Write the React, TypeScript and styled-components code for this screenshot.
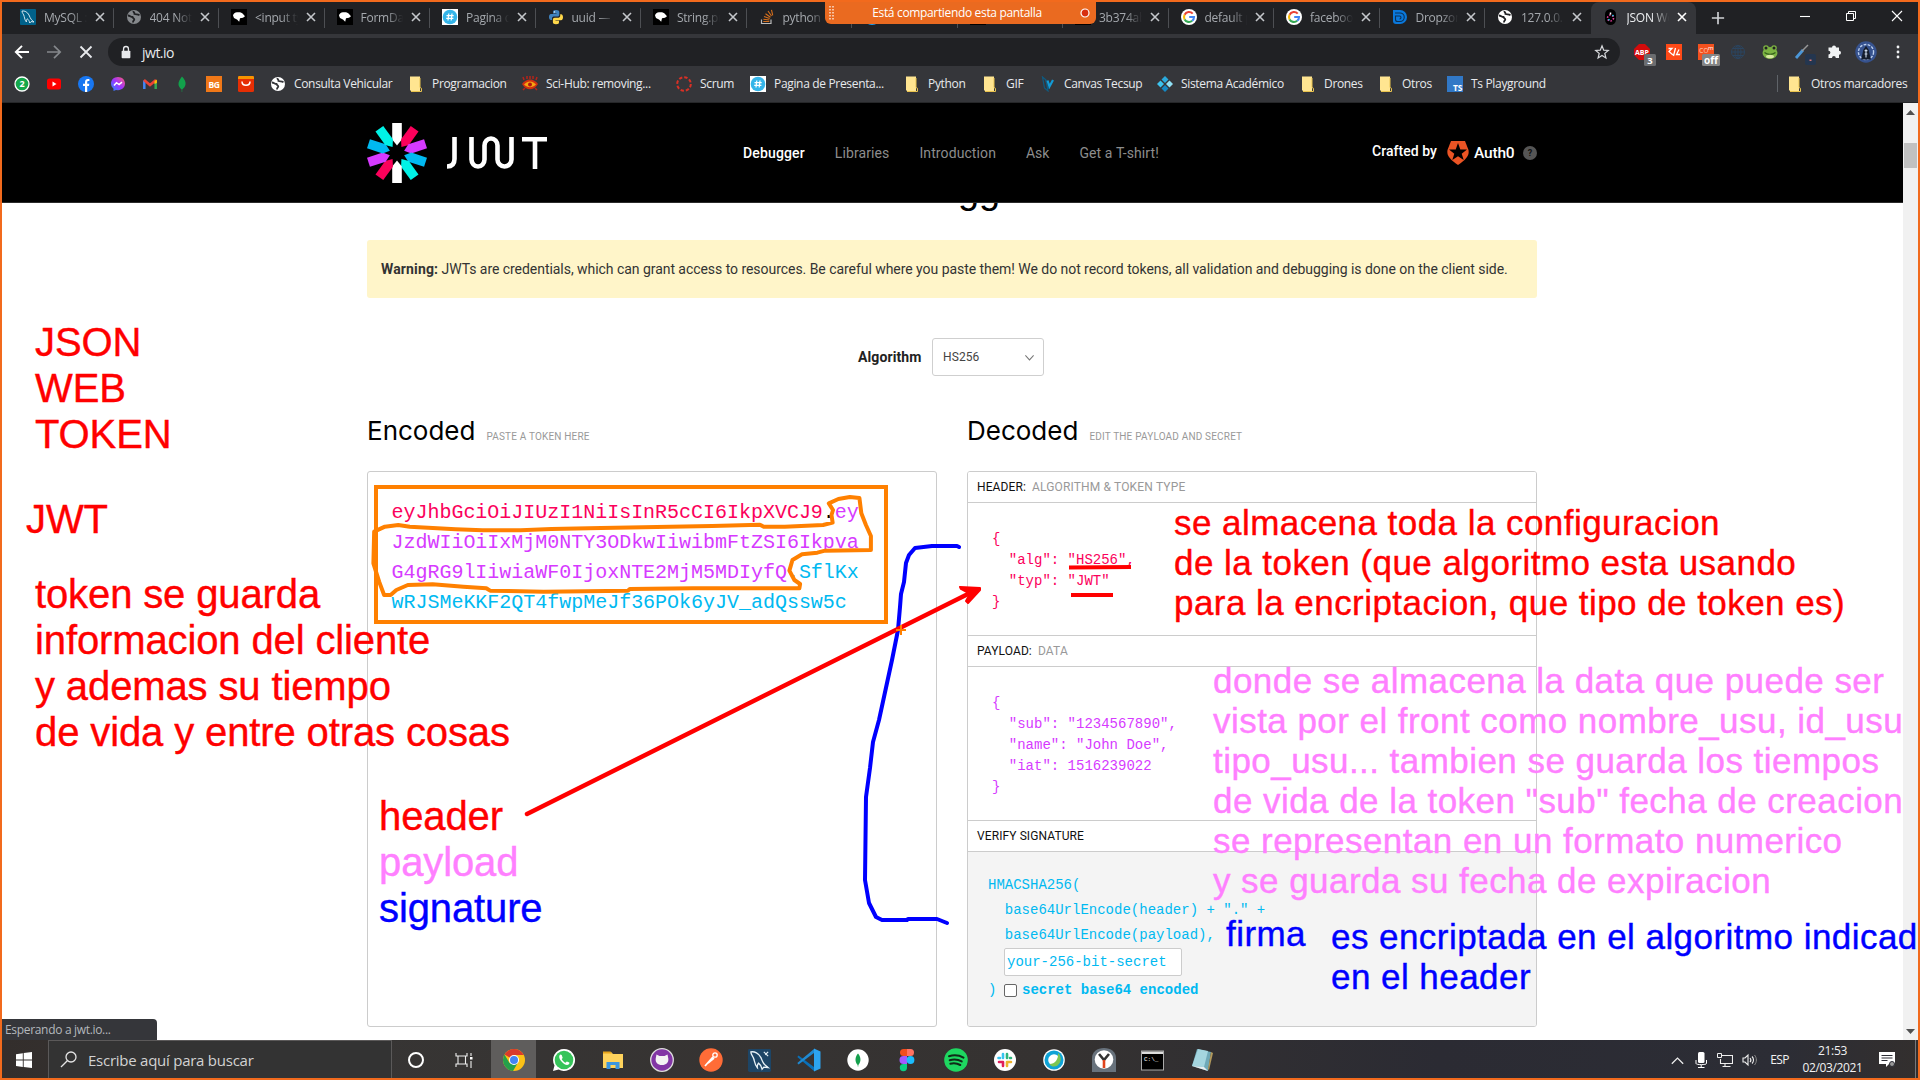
import React from 'react';
import styled, { createGlobalStyle } from 'styled-components';

const UI = '"Open Sans", "Noto Sans", sans-serif';
const SITE = 'Roboto, "Liberation Sans", sans-serif';
const MONO = '"Liberation Mono", "DejaVu Sans Mono", monospace';

const Global = createGlobalStyle`
  * { box-sizing: border-box; }
  body { margin: 0; background: #fff; overflow: hidden; }
  svg { display: block; flex: none; }
`;

const Screen = styled.div`
  position: relative;
  width: 1920px;
  height: 1080px;
  overflow: hidden;
  border: 2px solid #f26a1d;
  display: flex;
  flex-direction: column;
  font-family: ${UI};
`;

/* ---------- browser chrome ---------- */
const TabStrip = styled.div`
  height: 32px;
  background: #202124;
  display: flex;
  align-items: center;
  padding-left: 6px;
  flex: none;
`;
const Tab = styled.div<{ $active?: boolean; $bare?: boolean }>`
  width: 105.5px;
  height: 32px;
  display: flex;
  align-items: center;
  padding: 0 9px 2px 12px;
  border-radius: 8px 8px 0 0;
  background: ${p => (p.$active ? '#35363a' : 'transparent')};
  background-image: ${p => (p.$active || p.$bare ? 'none' : 'linear-gradient(#4d4f53, #4d4f53)')};
  background-size: 1px 20px;
  background-position: right 6px;
  background-repeat: no-repeat;
  color: ${p => (p.$active ? '#eceef0' : '#a5a9ae')};
  flex: none;
`;
const TabTitle = styled.span`
  width: 44px;
  margin: 0 7px 0 8px;
  overflow: hidden;
  white-space: nowrap;
  font-size: 12px;
  letter-spacing: -0.25px;
  mask-image: linear-gradient(90deg, #000 60%, transparent 98%);
`;
const NewTab = styled.div`
  width: 44px;
  display: flex;
  justify-content: center;
`;
const WindowButtons = styled.div`
  margin-left: auto;
  display: flex;
  padding-bottom: 5px;
  & > svg { margin: 0 15px; }
  & > :last-child { margin-right: 13px; }
`;
const Toolbar = styled.div`
  height: 36px;
  background: #35363a;
  display: flex;
  align-items: center;
  padding-left: 12px;
  flex: none;
`;
const NavButtons = styled.div`
  display: flex;
  gap: 16px;
  width: 94px;
`;
const Omnibox = styled.div`
  width: 1512px;
  height: 28px;
  border-radius: 14px;
  background: #202124;
  color: #e8eaed;
  font-size: 14px;
  letter-spacing: -0.5px;
  display: flex;
  align-items: center;
  padding: 0 10px 0 11px;
  gap: 9px;
  & > :last-child { margin-left: auto; }
`;
const Extensions = styled.div`
  display: flex;
  align-items: center;
  gap: 16px;
  padding-left: 14px;
  & > :nth-last-child(-n + 2) { margin-left: -3px; }
`;
const Bookmarks = styled.div`
  height: 33px;
  background: #35363a;
  border-bottom: 1px solid #262729;
  display: flex;
  align-items: center;
  padding: 0 0 5px 12px;
  flex: none;
`;
const Bookmark = styled.div<{ $w: number }>`
  width: ${p => p.$w}px;
  display: flex;
  align-items: center;
  gap: 8px;
  white-space: nowrap;
  font-size: 12px;
  letter-spacing: -0.33px;
  color: #e8eaed;
  flex: none;
`;
const OtherMarks = styled(Bookmark)`
  margin-left: auto;
  border-left: 1px solid #5f6368;
  padding-left: 9px;
`;

const ShareBanner = styled.div`
  position: absolute;
  left: 823px;
  top: 0;
  width: 271px;
  height: 22px;
  border-radius: 0 0 6px 6px;
  background: #ea6a20;
  color: #fff;
  font-size: 12px;
  letter-spacing: -0.34px;
  display: flex;
  align-items: center;
  justify-content: space-between;
  padding: 0 6px 1px 4px;
`;

/* ---------- site ---------- */
const Viewport = styled.div`
  flex: 1;
  display: flex;
  min-height: 0;
`;
const Site = styled.div`
  flex: 1;
  background: #fff;
  font-family: ${SITE};
  overflow: hidden;
`;
const SiteHeader = styled.header`
  height: 100px;
  background: #000;
  border-bottom: 1px solid #2a2a2a;
  padding-left: 365px;
  display: flex;
  align-items: center;
`;
const Wordmark = styled.svg`
  margin-left: 20px;
`;
const Nav = styled.nav`
  display: flex;
  gap: 30px;
  margin-left: 195px;
  font-size: 14px;
  width: 629px;
`;
const NavLink = styled.span<{ $on?: boolean; $sp: number }>`
  color: ${p => (p.$on ? '#fff' : '#8d8d8d')};
  font-weight: ${p => (p.$on ? 500 : 400)};
  letter-spacing: ${p => p.$sp}px;
  white-space: nowrap;
`;
const Crafted = styled.span`
  color: #fff;
  font-size: 14px;
  font-weight: 500;
  letter-spacing: 0.05px;
  width: 75px;
  padding-bottom: 4px;
  white-space: nowrap;
`;
const AuthName = styled.span`
  color: #fff;
  font-size: 15.5px;
  font-weight: 500;
  letter-spacing: -0.2px;
  margin: 0 10px 0 5px;
  width: 39px;
`;
const Help = styled.span`
  width: 14px;
  height: 14px;
  border-radius: 50%;
  background: #555;
  color: #111;
  font-size: 9px;
  font-weight: 700;
  line-height: 14px;
  text-align: center;
`;
const Main = styled.main`
  padding-left: 365px;
  width: 1535px;
  height: 837px;
  overflow: hidden;
`;
const Title = styled.h1`
  margin: -13px 0 0;
  padding-right: 3px;
  height: 50px;
  line-height: 0;
  font-family: "Liberation Sans", sans-serif;
  font-size: 38px;
  font-weight: 400;
  text-align: center;
  color: #000;
`;
const Warning = styled.div`
  height: 58px;
  border-radius: 3px;
  background: #fff5c9;
  color: #333;
  font-size: 14px;
  letter-spacing: -0.045px;
  line-height: 59px;
  padding-left: 14px;
  white-space: nowrap;
  & > b { letter-spacing: 0.14px; }
`;
const AlgoRow = styled.div`
  margin-top: 40px;
  height: 38px;
  padding-left: 491px;
  display: flex;
  align-items: center;
  font-size: 14px;
  font-weight: 700;
  letter-spacing: 0.1px;
  color: #222;
  & > span { width: 74px; }
`;
const Select = styled.div`
  width: 112px;
  height: 38px;
  border: 1px solid #cfcfcf;
  border-radius: 3px;
  display: flex;
  align-items: center;
  justify-content: space-between;
  padding: 0 8px 0 10px;
  font-size: 12px;
  font-weight: 400;
  color: #444;
`;
const Columns = styled.div`
  display: grid;
  grid-template-columns: 570px 570px;
  column-gap: 30px;
  margin-top: 40px;
`;
const Column = styled.section`
  display: flex;
  flex-direction: column;
`;
const ColumnTitle = styled.h2`
  margin: 0;
  height: 55px;
  display: flex;
  align-items: baseline;
  gap: 11px;
  font-family: Inter, ${SITE};
  font-size: 26px;
  font-weight: 400;
  line-height: 30px;
  letter-spacing: 0;
  color: #000;
`;
const Hint = styled.small`
  font-family: ${SITE};
  font-size: 10px;
  letter-spacing: 0.18px;
  color: #999;
`;
const Box = styled.div`
  height: 556px;
  border: 1px solid #ccc;
  border-radius: 3px;
  overflow: hidden;
`;
const Token = styled.div`
  padding: 26px 0 0 23.5px;
  font-family: ${MONO};
  font-size: 20px;
  line-height: 30px;
  letter-spacing: -0.02px;
  white-space: pre;
`;
const Ink = styled.span<{ $c: string }>`
  color: ${p => p.$c};
`;
const BoxHead = styled.div<{ $first?: boolean }>`
  height: ${p => (p.$first ? 31 : 32)}px;
  border-top: ${p => (p.$first ? 'none' : '1px solid #ccc')};
  border-bottom: 1px solid #ccc;
  padding: 1px 0 0 9px;
  line-height: 29px;
  font-size: 12px;
  letter-spacing: 0.1px;
  color: #111;
  background: #fff;
  & > span { color: #999; margin-left: 6px; letter-spacing: 0.16px; }
`;
const Json = styled.pre<{ $c: string; $h: number }>`
  margin: 0;
  height: ${p => p.$h}px;
  padding: 26px 0 0 24px;
  font-family: ${MONO};
  font-size: 14px;
  line-height: 21px;
  color: ${p => p.$c};
`;
const Signature = styled.div`
  height: 176px;
  background: #f4f4f4;
  padding: 21px 0 0 20px;
  font-family: ${MONO};
  font-size: 14px;
  line-height: 25px;
  color: #00b9f1;
  white-space: pre;
`;
const Secret = styled.div`
  width: 178px;
  height: 28px;
  margin: 0 0 0 16px;
  border: 1px solid #ccc;
  border-radius: 2px;
  background: #fff;
  padding-left: 2px;
  line-height: 27px;
`;
const Base64 = styled.div`
  display: flex;
  align-items: center;
  height: 28px;
  font-weight: 700;
  & > i { font-style: normal; font-weight: 400; width: 16px; }
`;
const Check = styled.span`
  width: 13px;
  height: 13px;
  border: 1px solid #666;
  border-radius: 2px;
  background: #fff;
  margin-right: 5px;
`;
const Scrollbar = styled.div`
  width: 15px;
  background: #f1f1f1;
  display: flex;
  flex-direction: column;
  align-items: center;
  padding: 7px 0 6px;
  & > :last-child { margin-top: auto; }
`;
const Thumb = styled.div`
  width: 13px;
  height: 25px;
  margin-top: 28px;
  background: #c1c1c1;
`;

/* ---------- taskbar ---------- */
const Taskbar = styled.div`
  height: 38px;
  flex: none;
  background: linear-gradient(90deg, #332e2c, #373534 15%, #353231 55%, #2b2b33 75%, #2c2d35 93%, #332f2e);
  display: flex;
  align-items: center;
  color: #f2f2f2;
`;
const Start = styled.div`
  width: 46px;
  padding: 1px 0 0 14px;
`;
const Search = styled.div`
  width: 344px;
  height: 38px;
  border: 1px solid #5b5959;
  border-bottom: 0;
  background: #333;
  display: flex;
  align-items: center;
  gap: 11px;
  padding-left: 11px;
  font-size: 15px;
  letter-spacing: -0.25px;
  color: #d2d2d2;
`;
const Slot = styled.div<{ $w: number; $on?: boolean }>`
  width: ${p => p.$w}px;
  height: 38px;
  padding-top: 2px;
  display: flex;
  align-items: center;
  justify-content: center;
  background: ${p => (p.$on ? '#5f5d5c' : 'transparent')};
`;
const Tray = styled.div`
  margin-left: auto;
  display: flex;
  align-items: center;
  height: 38px;
  font-size: 12px;
`;
const Language = styled.div`
  width: 29px;
  padding-left: 4px;
  letter-spacing: -0.6px;
  text-align: center;
`;
const Clock = styled.div`
  width: 81px;
  text-align: center;
  line-height: 17px;
  letter-spacing: -0.35px;
`;
const Desk = styled.div`
  width: 3px;
  height: 38px;
  border-left: 1px solid #77777a;
`;
const Status = styled.div`
  position: absolute;
  left: 0;
  top: 1017px;
  width: 155px;
  height: 21px;
  border-radius: 0 4px 0 0;
  background: #35363a;
  color: #b4b8bd;
  font-size: 12px;
  letter-spacing: -0.32px;
  line-height: 22px;
  padding-left: 3px;
`;

/* ---------- annotations ---------- */
const Drawing = styled.svg`
  position: absolute;
  left: -2px;
  top: -2px;
`;
const Note = styled.div<{ $x: number; $y: number; $c: string; $small?: boolean }>`
  position: absolute;
  left: ${p => p.$x - 2}px;
  top: ${p => p.$y - 2}px;
  color: ${p => p.$c};
  font-family: "Liberation Sans", Arial, sans-serif;
  font-size: ${p => (p.$small ? 35 : 40)}px;
  line-height: ${p => (p.$small ? 40 : 46)}px;
  letter-spacing: ${p => (p.$small ? 0.45 : -0.12)}px;
  -webkit-text-stroke: 0.4px ${p => p.$c};
  white-space: pre;
`;

/* ---------- icons ---------- */
const S = ({ n = 16, v, children }: { n?: number; v?: string; children: React.ReactNode }) => (
  <svg width={n} height={n} viewBox={v ?? '0 0 16 16'} fill="none">{children}</svg>
);
const Cross = ({ n = 10, c = '#c4c7cb', w = 1.6 }: { n?: number; c?: string; w?: number }) => (
  <S n={n} v="0 0 10 10"><path d="M1 1l8 8M9 1l-8 8" stroke={c} strokeWidth={w} /></S>
);
const Dolphin = ({ n = 16 }: { n?: number }) => (
  <S n={n}>
    <rect width="16" height="16" fill={n > 16 ? '#1d4566' : '#00618a'} rx="1" />
    <path d="M2 2c2.500-.5 5.500 1 7 4 .8 1.800 1.300 3.500 2.500 4.800l2.500 2.200-3-.4-1.200 1.400c-.5-2-1.300-3.400-2.500-4.200-.8 1-1 2-.8 3.200C5 11.500 4.700 9.500 4.200 7.500 3.800 5 2 4.200 2 2z" stroke="#e8f2f7" strokeWidth=".9" />
    {n > 16 && <path d="M11 2l3 3M12 4l2-2" stroke="#e8f2f7" strokeWidth=".8" />}
  </S>
);
const Globe = ({ c = '#fff', d = '#35363a' }: { c?: string; d?: string }) => (
  <S><circle cx="8" cy="8" r="7" fill={c} /><path d="M2 6.500c2 0 2.500 1.500 4.500 1.500.3 1.500 1.800 1 1.800 2.500 0 1-1.500 1-1.300 3M7.500 2c-.5 1.500 1.500 1.500 1 3 1.500.8 3 0 5 1.200" stroke={d} strokeWidth="1.800" /></S>
);
const Dino = () => (
  <S><rect width="16" height="16" fill="#000" /><path d="M2 6.500c.3-2 2-3 4-3.200 3-.3 5 .2 6 1.700l2 2.300-2 1.500-3 .4-.8 3.500L6 10.500 3 9z" fill="#fff" /></S>
);
const Hash = () => (
  <S><rect width="16" height="16" fill="#fff" /><circle cx="8" cy="8" r="7.300" fill="#35b5e9" /><path d="M6.800 4.500l-.8 7M10 4.500l-.8 7M4.500 6.600h7.200M4.200 9.400h7.200" stroke="#fff" strokeWidth="1.200" /></S>
);
const Python = () => (
  <S>
    <path d="M8 1c-2.500 0-3 .8-3 2v1.500h3.500V5H3C1.500 5 1 6.500 1 8s.5 3 2 3h1V9.500C4 8 5 7.500 6.500 7.500h3c1 0 1.800-.8 1.800-1.800V3c0-1.300-1-2-3.300-2z" fill="#3f82bd" />
    <path d="M8 15.200c2.500 0 3-.8 3-2v-1.500H7.500v-.5H13c1.500 0 2-1.500 2-3s-.5-3-2-3h-.8v1.500c0 1.500-1 2-2.500 2h-3c-1 0-1.800.8-1.800 1.800v2.700c0 1.300 1 2 3.100 2z" fill="#ffd84a" />
    <circle cx="6.500" cy="2.900" r=".7" fill="#fff" />
  </S>
);
const Stack = () => (
  <S><path d="M2.500 10.500v4h9.500v-4" stroke="#bcbbbb" strokeWidth="1.200" /><path d="M4.300 12.500h6M4.400 10.200l6 .8M5 7.600l5.700 2M6.500 4.700l5 3.500M9 2l3.500 5M12.500 .8l1.200 5.500" stroke="#d8701d" strokeWidth="1.100" /></S>
);
const Google = () => (
  <S>
    <circle cx="8" cy="8" r="8" fill="#fff" />
    <path d="M11.700 4.600A5 5 0 0 0 3.600 5.700" stroke="#ea4335" strokeWidth="2.100" />
    <path d="M3.600 5.700a5 5 0 0 0 0 4.700" stroke="#fbbc05" strokeWidth="2.100" />
    <path d="M3.600 10.400a5 5 0 0 0 7.600 1.400" stroke="#34a853" strokeWidth="2.100" />
    <path d="M11.200 11.800A5 5 0 0 0 13 8H8.200" stroke="#4285f4" strokeWidth="2.100" />
  </S>
);
const Dropzone = () => (
  <S><path d="M1 1h7a7 7 0 0 1 0 14H4a3 3 0 0 1-3-3z" fill="#0a78dc" /><path d="M3 4h5a4 4 0 0 1 0 8.500H5.500a2 2 0 0 1-2-2V7h4a1.500 1.500 0 0 1 0 3" stroke="#0a3158" strokeWidth="1.100" /></S>
);
const JwtTab = () => (
  <S><rect x="2" width="11" height="16" rx="5.500" fill="#000" /><circle cx="7.500" cy="9" r="3" stroke="#e23c9c" strokeWidth="1.600" strokeDasharray="1.600 1.500" /><path d="M7.500 3.500v2" stroke="#fff" strokeWidth="1.500" /><path d="M5.500 11.300l1-1M9.500 7l1-1" stroke="#13d5e8" strokeWidth="1.500" /></S>
);
const Folder = () => (
  <S><path d="M2 .5h10v15H3.500L2 14z" fill="#ffe591" /><path d="M12 2v9.500l1.500.8v3.200H3" stroke="#e9c34e" strokeWidth="1" /></S>
);
const Badge = ({ bg, t }: { bg: string; t: string }) => (
  <S><rect width="16" height="16" fill={bg} /><text x="8" y="11.500" textAnchor="middle" fontSize="8.500" fontWeight="700" fontFamily={UI} fill="#fff">{t}</text></S>
);

const petals = ['#fff', '#fb015b', '#d63aff', '#00b9f1', '#00f2e6', '#fff', '#fb015b', '#d63aff', '#00b9f1', '#00f2e6'];

const tabs: [React.ReactNode, string][] = [
  [<Dolphin />, 'MySQL :: '],
  [<Globe c="#85888c" d="#202124" />, '404 Not F'],
  [<Dino />, '<input ty'],
  [<Dino />, 'FormDat'],
  [<Hash />, 'Pagina de'],
  [<Python />, 'uuid — U'],
  [<Dino />, 'String.pr'],
  [<Stack />, 'python -'],
  [<S><rect width="16" height="16" rx="8" fill="#1da1f2" /></S>, ''],
  [<Dino />, ''],
  [<Dino />, '3b374ab'],
  [<Google />, 'default p'],
  [<Google />, 'facebook'],
  [<Dropzone />, 'Dropzone'],
  [<Globe d="#202124" />, '127.0.0.1'],
  [<JwtTab />, 'JSON We'],
];

const marks: [number, React.ReactNode, string][] = [
  [32, <S><circle cx="8" cy="8" r="7" fill="#14a84b" stroke="#fff" strokeWidth="1.300" /><text x="8" y="11.200" fontSize="9" fontWeight="700" fontFamily={UI} textAnchor="middle" fill="#fff">2</text></S>, ''],
  [32, <S><rect x="1" y="2.500" width="14" height="11" rx="2.500" fill="#f00" /><path d="M6.500 5.500v5L10.500 8z" fill="#fff" /></S>, ''],
  [32, <S><circle cx="8" cy="8" r="8" fill="#1877f2" /><path d="M7 16V10H5V7.800h2V6.200C7 4 8.200 3 10 3l1.400.1v2h-1c-.9 0-1.200.5-1.200 1.200v1.500h2.100L11 10H9.200v6z" fill="#fff" /></S>, ''],
  [32, <S><defs><linearGradient id="ms" x1="0" y1="1" x2="1" y2="0"><stop stopColor="#1a8cff" /><stop offset=".5" stopColor="#a033ff" /><stop offset="1" stopColor="#ff5c70" /></linearGradient></defs><path d="M8 1c4 0 7 2.800 7 6.600s-3 6.600-7 6.600l-2-.3L3.500 15v-2.300C2 11.500 1 9.700 1 7.600 1 3.800 4 1 8 1z" fill="url(#ms)" /><path d="M4 9.500l2.500-2.800 2.600 1.800L12 6.200" stroke="#fff" strokeWidth="1.500" /></S>, ''],
  [32, <S><path d="M2.300 13V4.500" stroke="#4285f4" strokeWidth="2.500" /><path d="M13.700 13V4.500" stroke="#34a853" strokeWidth="2.500" /><path d="M2 4l6 5 6-5" stroke="#ea4335" strokeWidth="2.600" /><path d="M12.500 5l2.400-1.500V7l-2.400 1z" fill="#fbbc04" /></S>, ''],
  [32, <S><path d="M8 .5c2.500 3 4 5 3.500 8-.3 2.300-2 4-3.300 5V16h-.5v-2.500c-1.700-1.300-3-2.800-3.200-5C4.200 5.500 6 3.500 8 .5z" fill="#12a14b" /></S>, ''],
  [32, <Badge bg="#f07818" t="BG" />, ''],
  [32, <S><rect width="16" height="16" rx="1.500" fill="#e62e04" /><path d="M0 3V1.500C0 .5.5 0 1.500 0h13c1 0 1.500.5 1.500 1.500V3z" fill="#f79400" /><path d="M4 5.500c0 5 8 5 8 0" stroke="#fff" strokeWidth="1.500" /></S>, ''],
  [138, <Globe />, 'Consulta Vehicular'],
  [114, <Folder />, 'Programacion'],
  [154, <S><path d="M0 8c4-6 12-6 16 0-4 7-12 7-16 0z" fill="#d22f12" /><path d="M2 4L1 1M5 3V0M8 3V0M11 3V0M14 4l1-3M3 12l-2 2M13 12l2 2" stroke="#b5241a" strokeWidth="1.500" /><path d="M2 8.500c4-4 8-4 12 0-4 3.500-8 3.500-12 0z" fill="#f5a512" /><circle cx="8" cy="8.500" r="2" fill="#b01510" /></S>, 'Sci-Hub: removing...'],
  [74, <S><circle cx="8" cy="8" r="6.800" stroke="#d93025" strokeWidth="2" strokeDasharray="3.400 1.940" /></S>, 'Scrum'],
  [154, <Hash />, 'Pagina de Presenta...'],
  [78, <Folder />, 'Python'],
  [58, <Folder />, 'GIF'],
  [117, <S><path d="M2.500 1l2 11 3.500 3-2-11zM5.500 4l3 9" stroke="#0f5b80" strokeWidth="1.200" /><path d="M7.500 4.500l2 6 3.500-6.500" stroke="#139bd6" strokeWidth="2.200" /></S>, 'Canvas Tecsup'],
  [143, <S><path d="M8 0l3.500 3.500L8 7 4.500 3.500z" fill="#2aa9dc" /><path d="M3.500 4.500L7 8l-3.500 3.500L0 8z" fill="#3cc3ee" /><path d="M12.500 4.500L16 8l-3.500 3.500L9 8z" fill="#8fe0f5" /><path d="M8 9l3.500 3.500L8 16l-3.500-3.500z" fill="#1488c4" /></S>, 'Sistema Académico'],
  [78, <Folder />, 'Drones'],
  [69, <Folder />, 'Otros'],
  [110, <S><rect width="16" height="16" fill="#3178c6" /><text x="15" y="14.500" textAnchor="end" fontSize="8.500" fontWeight="700" fontFamily={UI} fill="#fff">TS</text></S>, 'Ts Playground'],
];

const Chrome = () => (
  <S n={24} v="0 0 24 24">
    <circle cx="12" cy="12" r="11" fill="#fbc116" />
    <path d="M12 12L2.500 6.500A11 11 0 0 1 21.500 6.500H12z" fill="#d93a2b" />
    <path d="M2.500 6.500A11 11 0 0 0 11 23l5-8.500-8.500.5z" fill="#25a04b" />
    <path d="M12 6.500h9.500" stroke="#d93a2b" strokeWidth="1" />
    <circle cx="12" cy="12" r="5" fill="#fff" /><circle cx="12" cy="12" r="4" fill="#4384f3" />
  </S>
);

const apps: React.ReactNode[] = [
  <S n={24} v="0 0 24 24"><path d="M12 1a11 11 0 1 1-5.300 20.600L1 23l1.500-5.500A11 11 0 0 1 12 1z" fill="#fff" /><circle cx="12" cy="12" r="9.300" fill="#36c45a" /><path d="M8.500 6.500c-2 1-1.500 4 .8 6.800s5.300 4.500 7.200 3.300c1-.8 1-1.500.8-2l-2.500-1.200-1.300 1.400c-1.500-.5-3-2-3.800-3.700l1-1.200-1-2.800z" fill="#fff" /></S>,
  <S n={22} v="0 0 22 22"><path d="M1 3h8l2 2h10v14H1z" fill="#ffd35c" /><path d="M1 2.500h7.500l1.500 2H1z" fill="#e8a51b" /><path d="M4.500 20v-7h13v7h-4v-4h-5v4z" fill="#3b96e0" /></S>,
  <S n={24} v="0 0 24 24"><circle cx="12" cy="12" r="11.300" fill="#8236a5" stroke="#ddd" strokeWidth="1.300" /><path d="M6.500 6.500l3 1.500h5l3-1.500.8 4c.5 4-2 6.500-6.300 6.500s-6.800-2.500-6.300-6.500z" fill="#f4f4f4" /></S>,
  <S n={24} v="0 0 24 24"><circle cx="12" cy="12" r="11.700" fill="#ff6c37" /><path d="M6 18l8-9M9 15l6-5" stroke="#fff" strokeWidth="1.800" /><circle cx="16" cy="7" r="2.200" stroke="#fff" strokeWidth="1.300" /></S>,
  <Dolphin n={23} />,
  <S n={24} v="0 0 24 24"><path d="M1.500 7.500L17 19v4L.3 9z" fill="#0a70b8" /><path d="M1.500 16.500L17 5V1L.3 15z" fill="#1f8ad2" /><path d="M17 .5l6.500 3v17L17 23.500z" fill="#2ca4f0" /></S>,
  <S n={22} v="0 0 22 22"><circle cx="11" cy="11" r="10.700" fill="#fff" /><path d="M11 4.500c3 3.500 3.500 8 .3 11.500v1.500h-.6V16C7.500 12.500 8 8 11 4.500z" fill="#14a04d" /></S>,
  <S n={24} v="0 0 24 24"><path d="M8.500 1H12v7H8.500a3.500 3.500 0 0 1 0-7z" fill="#f24e1e" /><path d="M12 1h3.500a3.500 3.500 0 0 1 0 7H12z" fill="#ff7262" /><path d="M8.500 8H12v8H8.500a4 4 0 0 1 0-8z" fill="#a259ff" /><circle cx="15.500" cy="12" r="3.900" fill="#1abcfe" /><path d="M8.500 16H12v3.500A3.600 3.600 0 1 1 8.500 16z" fill="#0acf83" /></S>,
  <S n={24} v="0 0 24 24"><circle cx="12" cy="12" r="11.800" fill="#1ed760" /><path d="M5 8.200c5-1.400 10.500-.8 14.500 1.400M5.700 12.200c4-1.100 8.700-.6 12 1.200M6.300 15.800c3.400-.8 7-.4 10 1.200" stroke="#102a18" strokeWidth="2" strokeLinecap="round" /></S>,
  <S n={22} v="0 0 22 22"><circle cx="11" cy="11" r="11" fill="#fff" /><g strokeWidth="2.600" strokeLinecap="round"><path d="M9 5v4M4.500 9H6" stroke="#36c5f0" /><path d="M13 5v4M17 9h-1" stroke="#2eb67d" /><path d="M13 13v4M13 13h4" stroke="#ecb22e" /><path d="M9 13v4M5 13h4" stroke="#e01e5a" /></g></S>,
  <S n={22} v="0 0 22 22"><circle cx="11" cy="11" r="10.800" fill="#fff" /><circle cx="11" cy="11" r="9.500" fill="#0fa3d6" /><circle cx="11" cy="11" r="5.800" fill="#fff" /><path d="M15 4c3.500 2.500 4 9-.5 12.500-3 2-7 1-8-1.500C12 15 15.500 10.500 15 4z" fill="#7cc552" /></S>,
  <S n={24} v="0 0 24 24"><path d="M0 24V10C0 4 5 0 12 0s12 4 12 10v14z" fill="#68727c" /><circle cx="12" cy="11.500" r="9.300" fill="#fff" /><path d="M7 6l5 6 5-6" stroke="#333" strokeWidth="2.600" /><path d="M12 12v8" stroke="#e0431d" strokeWidth="2.600" /></S>,
  <S n={23} v="0 0 23 20"><rect x=".5" y=".5" width="22" height="19" fill="#000" stroke="#aaa" /><rect x="1" y="1" width="21" height="2.500" fill="#ddd" /><text x="3" y="10" fontSize="6" fontFamily={MONO} fill="#fff">C:\_</text></S>,
  <S n={24} v="0 0 24 24"><path d="M7 1l14 3-3 19-16-5z" fill="#6fa9b8" /><path d="M8 1l10 2-4 16L2 18z" fill="#a4d5df" /><path d="M2 18l12 1 4 4z" fill="#e7ecee" /><path d="M21 4l2 1-4 17-1-1z" fill="#b39a5c" /></S>,
];

export default function App() {
  return (
    <>
      <Global />
      <Screen>
        <TabStrip>
          {tabs.map(([icon, t], i) => (
            <Tab key={i} $active={i === 15} $bare={i === 14}>
              {icon}
              <TabTitle>{t}</TabTitle>
              <Cross c={i === 15 ? '#fff' : undefined} />
            </Tab>
          ))}
          <NewTab><S n={14}><path d="M8 1v14M1 8h14" stroke="#d0d2d5" strokeWidth="1.900" /></S></NewTab>
          <WindowButtons>
            <S><path d="M3 8.500h10" stroke="#fff" strokeWidth="1.100" /></S>
            <S><path d="M3.500 5.500h7v7h-7zM5.500 5.500v-2h7v7h-2" stroke="#fff" /></S>
            <S><path d="M3 3l10 10M13 3L3 13" stroke="#fff" strokeWidth="1.100" /></S>
          </WindowButtons>
        </TabStrip>
        <Toolbar>
          <NavButtons>
            <S><path d="M15 8H2M8 1.800L1.800 8 8 14.200" stroke="#fff" strokeWidth="1.900" /></S>
            <S><path d="M1 8h13M8 1.800L14.200 8 8 14.200" stroke="#85888c" strokeWidth="1.700" /></S>
            <S><path d="M2.500 2.500l11 11M13.500 2.500l-11 11" stroke="#e8eaed" strokeWidth="1.800" /></S>
          </NavButtons>
          <Omnibox>
            <S n={14}><rect x="3" y="6.500" width="10" height="8.500" rx="1" fill="#e8eaed" /><path d="M5.200 7V4.500a2.800 2.800 0 0 1 5.600 0V7" stroke="#e8eaed" strokeWidth="1.500" /></S>
            <span>jwt.io</span>
            <S><path d="M8 1.800l1.700 4.300 4.600.3-3.500 3 1.100 4.500L8 11.400l-3.900 2.500 1.100-4.500-3.500-3 4.600-.3z" stroke="#d8dadd" strokeWidth="1.200" /></S>
          </Omnibox>
          <Extensions>
            <svg width="16" height="16" viewBox="0 0 16 16" overflow="visible"><path d="M5 0h6l5 5v6l-5 5H5l-5-5V5z" fill="#d30b0b" /><text x="8" y="10.500" textAnchor="middle" fontSize="7" fontWeight="700" fontFamily={UI} fill="#fff">ABP</text><rect x="10" y="10" width="12" height="12" rx="1.500" fill="#6b6d70" /><text x="16" y="19.500" textAnchor="middle" fontSize="9.500" fontWeight="700" fontFamily={UI} fill="#fff">3</text></svg>
            <S><rect width="16" height="16" fill="#ff4a17" /><path d="M2.500 4.500H6l-3 3 4 3.500M9.500 4l-2 8M13 5.500l-2.500 5H14" stroke="#fff" strokeWidth="1.300" /></S>
            <svg width="16" height="16" viewBox="0 0 16 16" overflow="visible"><rect width="16" height="16" fill="#f4511e" /><text x="1" y="9" fontSize="9" fontFamily={UI} fill="#ffb59b">co</text><text x="10" y="6" fontSize="6" fontFamily={UI} fill="#fff">m</text><rect x="4" y="10" width="18" height="12" rx="1.500" fill="#858585" /><text x="13" y="19.500" textAnchor="middle" fontSize="10" fontWeight="700" fontFamily={UI} fill="#fff">off</text></svg>
            <S><circle cx="8" cy="8" r="6.500" stroke="#2b4560" strokeWidth="1" /><ellipse cx="8" cy="8" rx="3" ry="6.500" stroke="#2b4560" /><path d="M1.500 8h13M3 4.500h10M3 11.500h10M8 1v14" stroke="#2b4560" /></S>
            <S><ellipse cx="8" cy="9" rx="7.500" ry="6" fill="#7cb342" /><circle cx="4" cy="4" r="2.800" fill="#7cb342" /><circle cx="12" cy="4" r="2.800" fill="#7cb342" /><circle cx="4" cy="4" r="1.500" fill="#222" /><circle cx="12" cy="4" r="1.500" fill="#222" /><path d="M2.500 8.500c3 2.500 8 2.500 11 0" stroke="#34601a" strokeWidth="1.200" /><ellipse cx="8" cy="12.500" rx="4" ry="1.800" fill="#d8e8a0" /></S>
            <svg width="16" height="16" viewBox="0 0 16 16" overflow="visible"><path d="M2 14L9 6" stroke="#4b97d8" strokeWidth="2.800" /><path d="M8 7l6-6" stroke="#999" strokeWidth="1.500" /><rect x="11" y="10" width="11" height="11" rx="2" fill="#24364f" /><rect x="15.500" y="15.500" width="2" height="1.500" fill="#d77" /></svg>
            <S><path d="M6 3.500a2 2 0 1 1 4 0h3v3.200a2 2 0 1 1 0 4V14H9.800a1.900 1.900 0 1 0-3.800 0H2.500v-3.500a1.900 1.900 0 1 0 0-3.800V3.500z" fill="#f1f3f4" /></S>
            <S n={22}><circle cx="8" cy="8" r="7.800" fill="#36528e" /><circle cx="8" cy="8" r="5.500" stroke="#bcd0ef" strokeWidth="1" strokeDasharray="2 1" /><path d="M4.500 13.500l1.500-7L8 3.500 10 6.500l1.500 7z" fill="#151d2c" /><path d="M7 7h2M7 9.500h2M8 6v6" stroke="#cfdbec" strokeWidth=".8" /></S>
            <S><circle cx="8" cy="3" r="1.400" fill="#f1f3f4" /><circle cx="8" cy="8" r="1.400" fill="#f1f3f4" /><circle cx="8" cy="13" r="1.400" fill="#f1f3f4" /></S>
          </Extensions>
        </Toolbar>
        <Bookmarks>
          {marks.map(([w, icon, t], i) => (
            <Bookmark key={i} $w={w}>{icon}{t}</Bookmark>
          ))}
          <OtherMarks $w={141}><Folder />Otros marcadores</OtherMarks>
        </Bookmarks>

        <Viewport>
          <Site>
            <SiteHeader>
              <svg width="60" height="60" viewBox="-30 -30 60 60">
                {petals.map((c, i) => (
                  <path key={i} d="M-4.800 -30H4.800V-13.500L0 -7.500L-4.800 -13.500z" fill={c} transform={`rotate(${i * 36})`} />
                ))}
              </svg>
              <Wordmark width="101" height="33" viewBox="0 0 101 33" fill="none" stroke="#fff" strokeWidth="4.600">
                <path d="M7.500 1v22c0 5-2.500 7.500-7.500 7.500M24.500 1v22.500a6.500 7 0 0 0 13 0V9.500a6.500 7 0 0 1 13 0v14a7 7 0 0 0 14 0V1M75 3.300h25M88 2v31" />
              </Wordmark>
              <Nav>
                <NavLink $on $sp={0.15}>Debugger</NavLink>
                <NavLink $sp={0.1}>Libraries</NavLink>
                <NavLink $sp={0.1}>Introduction</NavLink>
                <NavLink $sp={0}>Ask</NavLink>
                <NavLink $sp={0.1}>Get a T-shirt!</NavLink>
              </Nav>
              <Crafted>Crafted by</Crafted>
              <svg width="22" height="24" viewBox="0 0 22 24"><path d="M4 0h14l3.500 9c1 6-2.500 9-10.500 15C3 18-.5 15 .5 9z" fill="#eb5424" /><path d="M11 2l2.300 6.500h6.700l-5.300 4.200 2 6.300L11 15.200 5.300 19l2-6.300L2 8.500h6.700z" fill="#000" /></svg>
              <AuthName>Auth0</AuthName>
              <Help>?</Help>
            </SiteHeader>
            <Main>
              <Title>Debugger</Title>
              <Warning><b>Warning:</b> JWTs are credentials, which can grant access to resources. Be careful where you paste them! We do not record tokens, all validation and debugging is done on the client side.</Warning>
              <AlgoRow>
                <span>Algorithm</span>
                <Select>HS256<S n={11}><path d="M2 5l6 6.500L14 5" stroke="#777" strokeWidth="1.500" /></S></Select>
              </AlgoRow>
              <Columns>
                <Column>
                  <ColumnTitle>Encoded <Hint>PASTE A TOKEN HERE</Hint></ColumnTitle>
                  <Box>
                    <Token>
                      <Ink $c="#fb015b">eyJhbGciOiJIUzI1NiIsInR5cCI6IkpXVCJ9</Ink>.<Ink $c="#d63aff">{'ey\nJzdWIiOiIxMjM0NTY3ODkwIiwibmFtZSI6Ikpva\nG4gRG9lIiwiaWF0IjoxNTE2MjM5MDIyfQ'}</Ink>.<Ink $c="#00b9f1">{'SflKx\nwRJSMeKKF2QT4fwpMeJf36POk6yJV_adQssw5c'}</Ink>
                    </Token>
                  </Box>
                </Column>
                <Column>
                  <ColumnTitle>Decoded <Hint>EDIT THE PAYLOAD AND SECRET</Hint></ColumnTitle>
                  <Box>
                    <BoxHead $first>HEADER:<span>ALGORITHM &amp; TOKEN TYPE</span></BoxHead>
                    <Json $c="#fb015b" $h={132}>{'{\n  "alg": "HS256",\n  "typ": "JWT"\n}'}</Json>
                    <BoxHead>PAYLOAD:<span>DATA</span></BoxHead>
                    <Json $c="#d63aff" $h={153}>{'{\n  "sub": "1234567890",\n  "name": "John Doe",\n  "iat": 1516239022\n}'}</Json>
                    <BoxHead>VERIFY SIGNATURE</BoxHead>
                    <Signature>
                      {'HMACSHA256(\n  base64UrlEncode(header) + "." +\n  base64UrlEncode(payload),'}
                      <Secret>your-256-bit-secret</Secret>
                      <Base64><i>)</i><Check />secret base64 encoded</Base64>
                    </Signature>
                  </Box>
                </Column>
              </Columns>
            </Main>
          </Site>
          <Scrollbar>
            <svg width="9" height="5" viewBox="0 0 9 5"><path d="M0 5L4.500 0 9 5z" fill="#505050" /></svg>
            <Thumb />
            <svg width="9" height="5" viewBox="0 0 9 5"><path d="M0 0l4.500 5L9 0z" fill="#505050" /></svg>
          </Scrollbar>
        </Viewport>

        <Taskbar>
          <Start><S><path d="M0 2.200L6.800 1.200v6.400H0zM7.700 1L16 0v7.600H7.700zM0 8.500h6.800v6.400L0 13.900zM7.700 8.500H16V16l-8.300-1.100z" fill="#fff" /></S></Start>
          <Search>
            <S n={17} v="0 0 17 17"><circle cx="11" cy="6" r="5" stroke="#e4e4e4" strokeWidth="1.300" /><path d="M7.300 9.700L1 16" stroke="#e4e4e4" strokeWidth="1.300" /></S>
            Escribe aquí para buscar
          </Search>
          <Slot $w={48}><S n={18} v="0 0 18 18"><circle cx="9" cy="9" r="7" stroke="#fff" strokeWidth="2" /></S></Slot>
          <Slot $w={48}><S n={18} v="0 0 18 18"><path d="M1 2V5h11V2M1 16v-3h11v3M3 5v8M10.500 5v8M16 2v3M16 10v7" stroke="#eee" strokeWidth="1.100" /><rect x="15" y="6" width="2.500" height="2.500" fill="#fff" /></S></Slot>
          <Slot $w={3} />
          <Slot $w={45} $on><Chrome /></Slot>
          <Slot $w={3} />
          {apps.map((a, i) => <Slot key={i} $w={49.1}>{a}</Slot>)}
          <Tray>
            <Slot $w={24}><S n={13}><path d="M1 12l7-7 7 7" stroke="#eee" strokeWidth="1.600" /></S></Slot>
            <Slot $w={24}><S><rect x="5" y="0" width="6.500" height="11" rx="1.500" fill="#fff" /><path d="M3 8v3.500c0 1.500 10.500 1.500 10.500 0V8M8.200 13v2.500M5 15.500h6.500" stroke="#fff" /></S></Slot>
            <Slot $w={24}><S><path d="M4 3.500h11.500v8H3.500V7M8 11.500v3M5.500 14.500h8" stroke="#eee" strokeWidth="1.100" /><path d="M.5 1.500h4v4h-4z" stroke="#eee" /></S></Slot>
            <Slot $w={26}><S><path d="M1 6h2l3-3v10l-3-3H1z" stroke="#eee" strokeWidth="1.100" /><path d="M8 6c1 1.200 1 3 0 4M10 4.500c2 2 2 5 0 7" stroke="#eee" strokeWidth="1.100" /><path d="M12.500 3c2.500 3 2.500 7 0 10" stroke="#888" /></S></Slot>
            <Language>ESP</Language>
            <Clock>21:53<br />02/03/2021</Clock>
            <Slot $w={28}><S><path d="M0 0h16v12h-6l-3 3v-3H0z" fill="#fff" /><path d="M2.500 3.500h11M2.500 6h11M2.500 8.500h6" stroke="#2c2d35" strokeWidth="1.100" /><circle cx="13" cy="12" r="2.500" fill="#999" stroke="#2c2d35" /></S></Slot>
            <Slot $w={14} />
            <Desk />
          </Tray>
        </Taskbar>

        <Status>Esperando a jwt.io...</Status>

        <ShareBanner>
          <svg width="5" height="16" viewBox="0 0 5 16"><path d="M1 1v15M4 1v15" stroke="#fff" strokeWidth="1.200" strokeDasharray="1.500 1.500" /></svg>
          <span>Está compartiendo esta pantalla</span>
          <S n={10} v="0 0 10 10"><circle cx="5" cy="5" r="4" fill="#d83010" stroke="#fff" strokeWidth="1.200" /></S>
        </ShareBanner>

        <Note $x={35} $y={319} $c="#f00">{'JSON\nWEB\nTOKEN'}</Note>
        <Note $x={26} $y={496} $c="#f00">JWT</Note>
        <Note $x={35} $y={571} $c="#f00">{'token se guarda\ninformacion del cliente\ny ademas su tiempo\nde vida y entre otras cosas'}</Note>
        <Note $x={379} $y={793} $c="#f00">header</Note>
        <Note $x={379} $y={839} $c="#ff80ff">payload</Note>
        <Note $x={379} $y={885} $c="#00f">signature</Note>
        <Note $small $x={1174} $y={503} $c="#f00">{'se almacena toda la configuracion\nde la token (que algoritmo esta usando\npara la encriptacion, que tipo de token es)'}</Note>
        <Note $small $x={1213} $y={661} $c="#ff80ff">{'donde se almacena la data que puede ser\nvista por el front como nombre_usu, id_usu\ntipo_usu... tambien se guarda los tiempos\nde vida de la token "sub" fecha de creacion\nse representan en un formato numerico\ny se guarda su fecha de expiracion'}</Note>
        <Note $small $x={1226} $y={914} $c="#00f">firma</Note>
        <Note $small $x={1331} $y={917} $c="#00f">{'es encriptada en el algoritmo indicado\nen el header'}</Note>

        <Drawing width="1920" height="1080" viewBox="0 0 1920 1080" fill="none" strokeWidth="4" strokeLinejoin="round" strokeLinecap="round">
          <rect x="376" y="487" width="510" height="135" stroke="#ff8000" strokeLinejoin="miter" />
          <g transform="translate(360 400) scale(.3827 .33333)">
            <path vectorEffect="non-scaling-stroke" stroke="#ff8000" d="M1225 310L1250 297 1280 291 1305 294 1310 340 1322 375 1335 408 1335 450 1215 452 1195 458 1155 463 1130 480 1122 512 1135 540 1150 552 1148 565 870 565 705 567 700 572 480 575 340 572 330 565 270 560 190 553 125 555 95 570 80 585 63 585 50 545 35 490 37 395 65 380 100 375 130 380 250 388 320 391 420 391 500 387 630 384 920 378 1045 374 1055 380 1110 380 1210 375 1235 368 1232 345 1236 330z" />
          </g>
          <path stroke="#00f" d="M959 547L957 546 932 546 915 548 909 555 906 563 904 582 901 594 900 607 898 630 892 660 879 720 873 742 870 768 866 797 865 880 869 903 876 917 882 920 907 920 908 919 937 919 947 923" />
          <path stroke="#f00" strokeWidth="4.500" d="M527 814L970 593" />
          <path fill="#f00" stroke="#f00" strokeWidth="2" d="M960 587L980 588V590L968 603 966 601 970 594 961 589z" />
          <path stroke="#f00" strokeLinecap="butt" d="M1069 567.500L1131 567M1071 595H1113" />
          <path stroke="#ff8000" strokeWidth="2" strokeLinecap="butt" d="M896 630h10M901 625v10" />
        </Drawing>
      </Screen>
    </>
  );
}
